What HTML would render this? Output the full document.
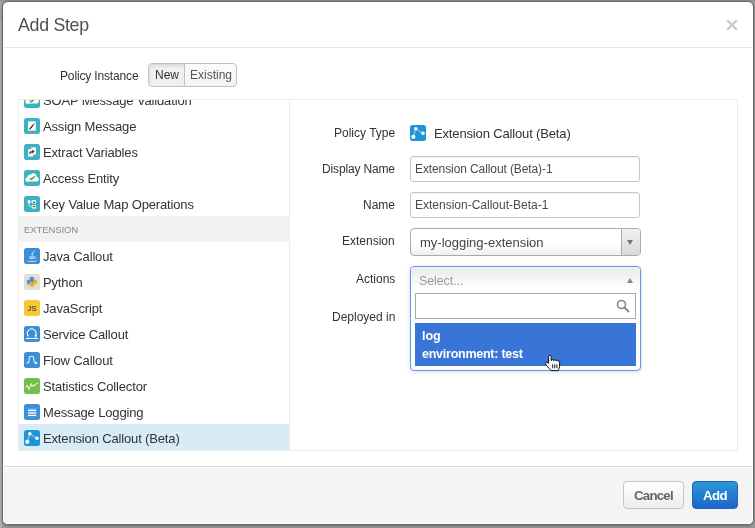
<!DOCTYPE html>
<html><head><meta charset="utf-8">
<style>
*{box-sizing:border-box;margin:0;padding:0}
html,body{width:755px;height:528px;overflow:hidden}
body{background:#9b9b9b;font-family:"Liberation Sans",sans-serif;color:#333;position:relative}
.a{position:absolute}
.t{position:absolute;white-space:nowrap;line-height:1;will-change:transform}
#modal{left:2px;top:1px;width:752px;height:524px;border:1px solid #6a6a6a;border-radius:6px;background:#fff;overflow:hidden;box-shadow:0 1px 3px rgba(0,0,0,.35)}
#footer{left:3px;top:466px;width:750px;height:58px;background:#f4f4f4;border-top:1px solid #dedede;box-shadow:inset 1px 1px 0 #fff,inset -1px -1px 0 #fff;border-radius:0 0 5px 5px}
#grp{left:148px;top:63px;width:89px;height:24px;border:1px solid #bcc4c9;border-radius:4px;overflow:hidden;background:linear-gradient(#fcfcfc,#f3f3f3)}
#grp .new{position:absolute;left:0;top:0;width:36px;height:22px;background:#f0f0f0;box-shadow:inset 1px 2px 3px rgba(0,0,0,.1);border-right:1px solid #bcc4c9}
#box{left:18px;top:99px;width:720px;height:352px;border:1px solid #ececec}
#list{left:19px;top:100px;width:270px;height:350px;overflow:hidden}
#divider{left:289px;top:100px;width:1px;height:350px;background:#ececec}
.row{position:absolute;left:0;width:270px;height:26px}
.row .ic{position:absolute;left:5px;top:6px;width:16px;height:16px}
.row .ic svg{display:block}
.row.hl{background:#d8ecf8}
.row.sec{background:#f2f2f2}
.inp{position:absolute;border:1px solid #c6c6c6;border-radius:3px;background:#fff;box-shadow:inset 0 1px 1px rgba(0,0,0,.06)}
.btn{position:absolute;border-radius:4px}
</style></head><body>
<div class="a" style="left:0;top:0;width:755px;height:1px;background:#8f8f8f"></div>
<div class="a" style="left:0;top:1px;width:2px;height:18px;background:#a6a6a6"></div>
<div class="a" style="left:0;top:19px;width:2px;height:509px;background:#b0b0b0"></div>
<div class="a" style="left:0;top:19px;width:2px;height:1px;background:#9f9f9f"></div>
<div class="a" id="modal"></div>
<div class="a" id="footer"></div>
<div class="t" style="left:18.00px;top:16.93px;font-size:17.8px;color:#505050;font-weight:normal;letter-spacing:-0.3px">Add Step</div>

<svg class="a" style="left:726px;top:19px" width="12" height="12" viewBox="0 0 12 12"><path d="M2 2L10 10M10 2L2 10" stroke="#c9c9c9" stroke-width="2.4" stroke-linecap="round"/></svg>
<div class="a" style="left:3px;top:47px;width:750px;height:1px;background:#e6e6e6"></div>
<div class="t" style="left:60.00px;top:69.64px;font-size:12px;color:#333;font-weight:normal;letter-spacing:-0.15px">Policy Instance</div>

<div class="a" id="grp"><div class="new"></div></div>
<div class="t" style="left:154.60px;top:69.04px;font-size:12px;color:#333;font-weight:normal;">New</div>

<div class="t" style="left:190.00px;top:69.04px;font-size:12px;color:#555;font-weight:normal;">Existing</div>

<div class="a" id="box"></div>
<div class="a" id="list">
<div class="row" style="top:-14px"><div class="ic"><svg width="16" height="16" viewBox="0 0 16 16"><rect x="0" y="0" width="16" height="16" rx="2.5" fill="#3cb1bf"/><g fill="#fff"><circle cx="3.6" cy="9.6" r="2.3"/><circle cx="6.2" cy="7" r="2.6"/><circle cx="9.4" cy="6.1" r="2.9"/><circle cx="12.4" cy="9.2" r="2.4"/><rect x="3.6" y="7.5" width="8.8" height="4"/></g><g fill="#3cb1bf"><circle cx="5.6" cy="12.9" r="1.2"/><circle cx="12.2" cy="12.9" r="1.2"/></g><path d="M5.8 8.6l1.7 1.2 3.3-2.9" stroke="#5a9e3e" stroke-width="1.5" fill="none"/></svg></div><div class="t" style="left:23.5px;top:8.00px;font-size:13px;color:#333;letter-spacing:-0.15px">SOAP Message Validation</div></div>
<div class="row" style="top:12px"><div class="ic"><svg width="16" height="16" viewBox="0 0 16 16"><rect x="0" y="0" width="16" height="16" rx="2.5" fill="#3cb1bf"/><rect x="4.1" y="3.4" width="7.7" height="9.2" fill="#fff"/><path d="M5.5 11.2L9.2 7" stroke="#333" stroke-width="1.3"/><path d="M9.2 7L10.6 5.4" stroke="#999" stroke-width="1.3"/></svg></div><div class="t" style="left:23.5px;top:8.00px;font-size:13px;color:#333;letter-spacing:-0.15px">Assign Message</div></div>
<div class="row" style="top:38px"><div class="ic"><svg width="16" height="16" viewBox="0 0 16 16"><rect x="0" y="0" width="16" height="16" rx="2.5" fill="#3cb1bf"/><rect x="7.2" y="3.4" width="4.8" height="7.2" fill="#fff"/><rect x="4.1" y="5.1" width="5.1" height="7.5" fill="#f6f3f2"/><path d="M5.6 9.6C6 8.3 6.9 7.6 8.6 7.6" stroke="#333" stroke-width="1.3" fill="none"/><path d="M8.2 5.6l2.5 1.9-2.5 2z" fill="#333"/></svg></div><div class="t" style="left:23.5px;top:8.00px;font-size:13px;color:#333;letter-spacing:-0.15px">Extract Variables</div></div>
<div class="row" style="top:64px"><div class="ic"><svg width="16" height="16" viewBox="0 0 16 16"><rect x="0" y="0" width="16" height="16" rx="2.5" fill="#3cb1bf"/><g fill="#fff"><circle cx="3.6" cy="9.6" r="2.3"/><circle cx="6.2" cy="7" r="2.6"/><circle cx="9.4" cy="6.1" r="2.9"/><circle cx="12.4" cy="9.2" r="2.4"/><rect x="3.6" y="7.5" width="8.8" height="4"/></g><g fill="#3cb1bf"><circle cx="5.6" cy="12.9" r="1.2"/><circle cx="12.2" cy="12.9" r="1.2"/></g><path d="M5.8 8.2l1.7 1.2 3.3-3" stroke="#5a9e3e" stroke-width="1.5" fill="none"/></svg></div><div class="t" style="left:23.5px;top:8.00px;font-size:13px;color:#333;letter-spacing:-0.15px">Access Entity</div></div>
<div class="row" style="top:90px"><div class="ic"><svg width="16" height="16" viewBox="0 0 16 16"><rect x="0" y="0" width="16" height="16" rx="2.5" fill="#3cb1bf"/><rect x="3.8" y="4.1" width="2.4" height="3.1" fill="#fff"/><path d="M6.2 5.8H8.4" stroke="#fff" stroke-width=".9"/><path d="M5 7.2C5 9.8 6 11 8.2 11" stroke="#fff" stroke-opacity=".75" stroke-width="1" fill="none"/><rect x="8.2" y="4.1" width="3.8" height="3.4" fill="#fff"/><rect x="9.1" y="5.7" width="2" height="1.1" fill="#3a3a3a"/><rect x="8.2" y="9.2" width="3.8" height="3.4" fill="#fff"/><rect x="9.1" y="10.1" width="2" height="1.1" fill="#3a3a3a"/></svg></div><div class="t" style="left:23.5px;top:8.00px;font-size:13px;color:#333;letter-spacing:-0.15px">Key Value Map Operations</div></div>
<div class="row sec" style="top:116px"><div class="t" style="left:5.4px;top:8.96px;font-size:9.5px;color:#8a8a8a;letter-spacing:-0.1px">EXTENSION</div></div>
<div class="row" style="top:142px"><div class="ic"><svg width="16" height="16" viewBox="0 0 16 16"><rect x="0" y="0" width="16" height="16" rx="2.5" fill="#3a8fd6"/><g stroke="#fff" fill="none"><path d="M10.6 2.6L7.3 6.8" stroke-width=".9" stroke-opacity=".8"/><path d="M8.9 5.2c-1.6 1.2 .8 1.8-.4 3" stroke-width=".9" stroke-opacity=".7"/><path d="M10.8 8.6c1.2 0 1.1 1.6-.3 1.7" stroke-width=".8" stroke-opacity=".7"/><path d="M3.4 12.8c2.4 1 7 1 9 0" stroke-width=".9" stroke-opacity=".75"/></g><path d="M5 8.3h5.8c0 2.1-1.2 3.2-2.9 3.2S5 10.4 5 8.3z" fill="#fff" fill-opacity=".55"/></svg></div><div class="t" style="left:23.5px;top:8.00px;font-size:13px;color:#333;letter-spacing:-0.15px">Java Callout</div></div>
<div class="row" style="top:168px"><div class="ic"><svg width="16" height="16" viewBox="0 0 16 16"><rect width="16" height="16" rx="2.5" fill="#e1ded5"/><g fill="#4a8fd8"><rect x="5.8" y="3.1" width="4.1" height="4.5"/><rect x="3.1" y="5.8" width="6.8" height="4.5"/></g><g fill="#f1b027"><rect x="9.9" y="5.8" width="3.1" height="3.8"/><rect x="5.8" y="8.2" width="4.4" height="4.4"/><rect x="5.8" y="8.2" width="7.2" height="1.4"/></g></svg></div><div class="t" style="left:23.5px;top:8.00px;font-size:13px;color:#333;letter-spacing:-0.15px">Python</div></div>
<div class="row" style="top:194px"><div class="ic"><svg width="16" height="16" viewBox="0 0 16 16"><rect width="16" height="16" rx="2.5" fill="#f6c938"/><text x="8" y="10.9" text-anchor="middle" font-family="Liberation Sans" font-size="8" fill="#2a2a2a">JS</text></svg></div><div class="t" style="left:23.5px;top:8.00px;font-size:13px;color:#333;letter-spacing:-0.15px">JavaScript</div></div>
<div class="row" style="top:220px"><div class="ic"><svg width="16" height="16" viewBox="0 0 16 16"><rect x="0" y="0" width="16" height="16" rx="2.5" fill="#3a8fd6"/><path d="M4.6 10.3A4.3 4.3 0 1 1 11.3 9.6" stroke="#fff" stroke-width="1.1" fill="none"/><path d="M10.2 9.4l3-.3-1.4 2.4z" fill="#fff"/><rect x="2.1" y="11.9" width="11.9" height="1.1" fill="#fff"/></svg></div><div class="t" style="left:23.5px;top:8.00px;font-size:13px;color:#333;letter-spacing:-0.15px">Service Callout</div></div>
<div class="row" style="top:246px"><div class="ic"><svg width="16" height="16" viewBox="0 0 16 16"><rect x="0" y="0" width="16" height="16" rx="2.5" fill="#3a8fd6"/><path d="M2.4 10.9h2.1c.7 0 .6-6.4 1.3-6.4h3.4c.6 0 .7 6.4 1.5 6.4h1.2" stroke="#fff" stroke-opacity=".85" stroke-width="1.1" fill="none"/><path d="M11.6 9.1l2.1 1.8-2.1 1.8z" fill="#fff"/></svg></div><div class="t" style="left:23.5px;top:8.00px;font-size:13px;color:#333;letter-spacing:-0.15px">Flow Callout</div></div>
<div class="row" style="top:272px"><div class="ic"><svg width="16" height="16" viewBox="0 0 16 16"><rect x="0" y="0" width="16" height="16" rx="2.5" fill="#76bd4b"/><path d="M1.9 9.5L3.4 7.4 5 11.6 7.2 5.5 8.2 8.2 9.2 7.2 10.2 7.9 11.6 6.2 14 5.1" stroke="#fff" stroke-opacity=".8" stroke-width="1.1" fill="none" stroke-linejoin="round"/></svg></div><div class="t" style="left:23.5px;top:8.00px;font-size:13px;color:#333;letter-spacing:-0.15px">Statistics Collector</div></div>
<div class="row" style="top:298px"><div class="ic"><svg width="16" height="16" viewBox="0 0 16 16"><rect x="0" y="0" width="16" height="16" rx="2.5" fill="#3a8fd6"/><rect x="3.9" y="4.1" width="8.7" height="8.2" fill="#fff" fill-opacity=".2"/><g fill="#fff"><rect x="4.1" y="5.8" width="7.9" height="1.2"/><rect x="4.1" y="8.4" width="7.9" height="1.2"/><rect x="4.1" y="10.9" width="7.9" height="1"/></g></svg></div><div class="t" style="left:23.5px;top:8.00px;font-size:13px;color:#333;letter-spacing:-0.15px">Message Logging</div></div>
<div class="row hl" style="top:324px"><div class="ic"><svg width="16" height="16" viewBox="0 0 16 16"><rect x="0" y="0" width="16" height="16" rx="2.5" fill="#1f95d7"/><path d="M3.3 11.8L5.8 3.8 13 8.2" stroke="#fff" stroke-opacity=".75" stroke-width=".8" fill="none"/><circle cx="5.8" cy="3.8" r="1.75" fill="#fff"/><circle cx="13" cy="8.2" r="1.75" fill="#fff"/><circle cx="3.3" cy="11.8" r="2.1" fill="#fff"/></svg></div><div class="t" style="left:23.5px;top:8.00px;font-size:13px;color:#333;letter-spacing:-0.15px">Extension Callout (Beta)</div></div>
</div>
<div class="a" id="divider"></div>
<div class="t" style="right:360.00px;top:127.04px;font-size:12px;color:#333;font-weight:normal;">Policy Type</div>

<div class="t" style="right:360.00px;top:162.74px;font-size:12px;color:#333;font-weight:normal;letter-spacing:-0.15px">Display Name</div>

<div class="t" style="right:360.00px;top:198.84px;font-size:12px;color:#333;font-weight:normal;">Name</div>

<div class="t" style="right:360.00px;top:234.74px;font-size:12px;color:#333;font-weight:normal;">Extension</div>

<div class="t" style="right:360.00px;top:272.54px;font-size:12px;color:#333;font-weight:normal;">Actions</div>

<div class="t" style="right:360.00px;top:310.64px;font-size:12px;color:#333;font-weight:normal;">Deployed in</div>

<div class="a" style="left:410px;top:125px;width:16px;height:16px"><svg width="16" height="16" viewBox="0 0 16 16"><rect x="0" y="0" width="16" height="16" rx="2.5" fill="#1f95d7"/><path d="M3.3 11.8L5.8 3.8 13 8.2" stroke="#fff" stroke-opacity=".75" stroke-width=".8" fill="none"/><circle cx="5.8" cy="3.8" r="1.75" fill="#fff"/><circle cx="13" cy="8.2" r="1.75" fill="#fff"/><circle cx="3.3" cy="11.8" r="2.1" fill="#fff"/></svg></div>
<div class="t" style="left:434.00px;top:126.80px;font-size:13px;color:#333;font-weight:normal;letter-spacing:-0.15px">Extension Callout (Beta)</div>

<div class="inp" style="left:410px;top:156px;width:230px;height:26px"></div>
<div class="t" style="left:414.60px;top:163.14px;font-size:12px;color:#4a4a4a;font-weight:normal;letter-spacing:-0.1px">Extension Callout (Beta)-1</div>

<div class="inp" style="left:410px;top:192px;width:230px;height:26px"></div>
<div class="t" style="left:414.60px;top:199.14px;font-size:12px;color:#4a4a4a;font-weight:normal;">Extension-Callout-Beta-1</div>

<div class="a" style="left:410px;top:228px;width:231px;height:28px;border:1px solid #a9a9a9;border-radius:4px;overflow:hidden;background:linear-gradient(#fff 55%,#f1f1f1)"><div class="a" style="left:210px;top:0;width:19px;height:26px;border-left:1px solid #a9a9a9;background:linear-gradient(#f2f2f2,#d8d8d8)"></div></div>
<svg class="a" style="left:627px;top:240px" width="6" height="5"><path d="M0 0H6L3 5z" fill="#777"/></svg>
<div class="t" style="left:419.50px;top:235.60px;font-size:13px;color:#444;font-weight:normal;">my-logging-extension</div>

<div class="a" style="left:410px;top:266px;width:231px;height:105px;border:1px solid #5897fb;border-radius:4px;background:#fff;box-shadow:0 1px 4px rgba(0,0,0,.15)"></div>
<div class="a" style="left:411px;top:267px;width:229px;height:26px;border-radius:3px 3px 0 0;background:linear-gradient(#eee 20%,#fff 80%)"></div>
<div class="t" style="left:419.30px;top:274.59px;font-size:12.3px;color:#999;font-weight:normal;">Select...</div>

<svg class="a" style="left:627px;top:278px" width="6" height="5"><path d="M0 5H6L3 0z" fill="#888"/></svg>
<div class="a" style="left:415px;top:293px;width:221px;height:26px;border:1px solid #aaa;background:#fff"></div>
<svg class="a" style="left:616px;top:299px" width="14" height="14" viewBox="0 0 14 14"><circle cx="5.5" cy="5.5" r="4" stroke="#888" stroke-width="1.6" fill="none"/><path d="M8.5 8.5L12.5 12.5" stroke="#888" stroke-width="2" stroke-linecap="round"/></svg>
<div class="a" style="left:415px;top:323px;width:221px;height:43px;background:#3875d7"></div>
<div class="t" style="left:422.00px;top:329.92px;font-size:12.5px;color:#fff;font-weight:bold;">log</div>

<div class="t" style="left:422.00px;top:347.92px;font-size:12.5px;color:#fff;font-weight:bold;letter-spacing:-0.25px">environment: test</div>

<svg class="a" style="left:542px;top:350px" width="22" height="24" viewBox="0 0 22 24"><path d="M6.6 13.2V6.6C6.6 4.9 9.2 4.9 9.2 6.6V10.6C9.3 9.3 11.5 9.3 11.6 10.6C11.7 9.5 13.9 9.5 14 10.8C14.1 9.9 16.4 10 16.5 11.4C16.7 10.8 17.6 11.2 17.6 12.3V16.3C17.6 18 16.8 19 16.1 20.6H8.9C8 19.2 6.3 17.6 4.3 15.2C3.2 13.9 3.4 12.2 4.6 12.3C5.4 12.4 6 12.8 6.6 13.4Z" fill="#fff" stroke="#000" stroke-width=".95" stroke-linejoin="round"/><path d="M10.7 14.3V18.3M12.8 14.3V18.3M14.9 14.3V18.3" stroke="#000" stroke-width=".9"/></svg>
<div class="btn" style="left:623px;top:481px;width:61px;height:28px;border:1px solid #c2c9cd;background:linear-gradient(#fff,#ededed)"></div>
<div class="t" style="left:634.30px;top:489.34px;font-size:13.3px;color:#666;font-weight:bold;letter-spacing:-0.8px">Cancel</div>

<div class="btn" style="left:692px;top:481px;width:46px;height:28px;border:1px solid #2163b4;background:linear-gradient(#2b96d8,#1c66c8)"></div>
<div class="t" style="left:703.00px;top:489.34px;font-size:13.3px;color:#fff;font-weight:bold;letter-spacing:-0.6px">Add</div>

</body></html>
